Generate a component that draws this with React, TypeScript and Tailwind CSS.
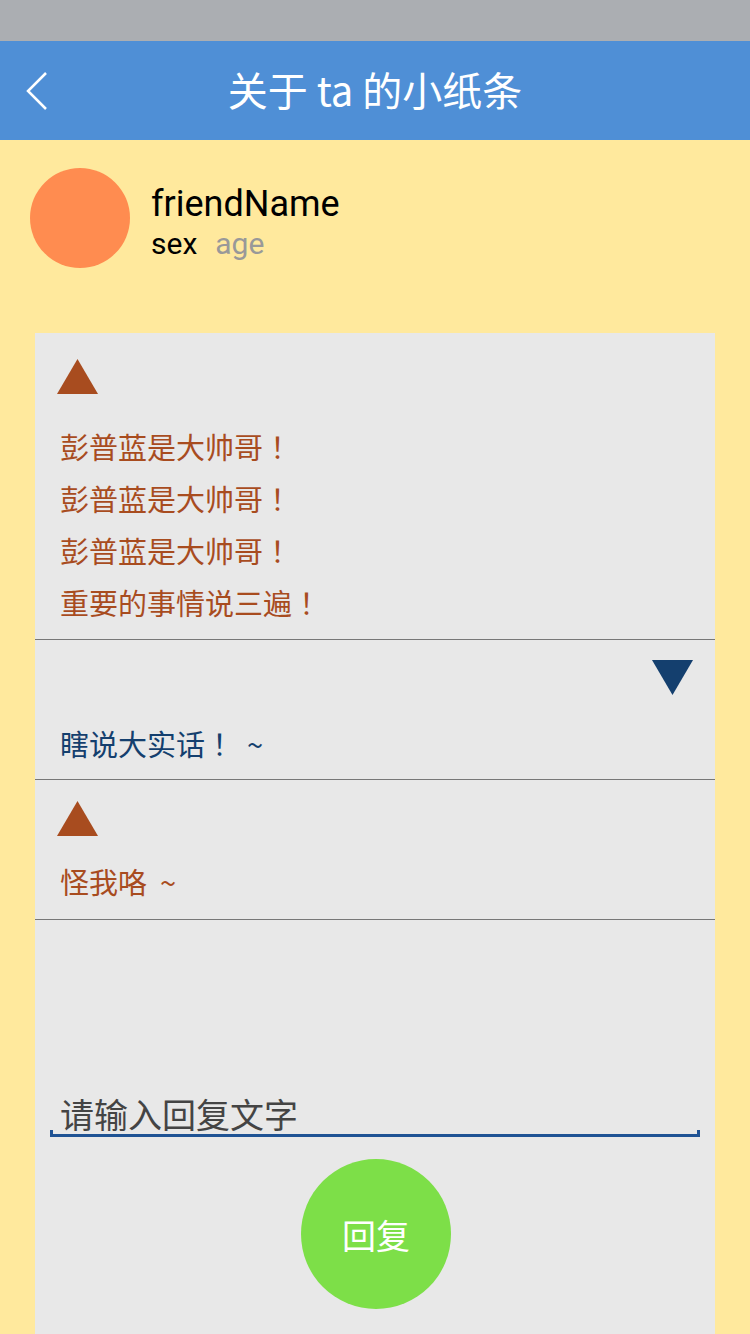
const font = "font-['Noto_Sans_CJK_SC','Noto_Sans',sans-serif]";

// 全角感叹号居中显示
function Bang() {
  return <span className="font-['Noto_Sans_CJK_TC',sans-serif]">！</span>;
}

function Up() {
  return (
    <svg width="41" height="35" viewBox="0 0 41 35" className="block">
      <polygon points="20.5,0 41,35 0,35" fill="#a84c1f" />
    </svg>
  );
}

function Down() {
  return (
    <svg width="41" height="35" viewBox="0 0 41 35" className="block">
      <polygon points="0,0 41,0 20.5,35" fill="#143f6e" />
    </svg>
  );
}

export default function App() {
  return (
    <div className={`w-[750px] h-[1334px] overflow-hidden bg-[#ffe99d] flex flex-col ${font}`}>
      {/* 状态栏 */}
      <div className="h-[41px] bg-[#abaeb2]" />

      {/* 标题栏 */}
      <div className="h-[99px] bg-[#4f8fd6] flex items-center relative">
        <svg width="24" height="40" viewBox="0 0 24 40" className="ml-[25px]">
          <polyline points="21,2 3,20 21,38" fill="none" stroke="#fff" strokeWidth="2.5" />
        </svg>
        <div className="absolute inset-0 flex items-center justify-center text-white text-[40px] leading-none pb-[4px]">
          关于 ta 的小纸条
        </div>
      </div>

      {/* 好友信息 */}
      <div className="flex pl-[30px] pt-[28px] h-[128px] items-start font-['Roboto',sans-serif]">
        <div className="w-[100px] h-[100px] rounded-full bg-[#ff8c50]" />
        <div className="ml-[21px] pt-[16px] flex flex-col">
          <div className="text-[36px] leading-[40px] text-black">friendName</div>
          <div className="text-[30px] leading-[40px] flex gap-[18px]">
            <span className="text-black">sex</span>
            <span className="text-[#999]">age</span>
          </div>
        </div>
      </div>

      {/* 纸条卡片 */}
      <div className="mx-[35px] mt-[65px] flex-1 bg-[#e8e8e8] flex flex-col">
        <div className="pt-[26px] pb-[11px] border-b border-[#777]">
          <div className="pl-[22px]"><Up /></div>
          <div className="mt-[26px] pl-[25px] text-[29px] leading-[52px] text-[#a84c1f]">
            <div>彭普蓝是大帅哥<Bang /></div>
            <div>彭普蓝是大帅哥<Bang /></div>
            <div>彭普蓝是大帅哥<Bang /></div>
            <div>重要的事情说三遍<Bang /></div>
          </div>
        </div>

        <div className="pt-[20px] pb-[10px] border-b border-[#777]">
          <div className="flex justify-end pr-[22px]"><Down /></div>
          <div className="mt-[22px] pl-[25px] text-[29px] leading-[52px] text-[#143f6e]">瞎说大实话<Bang />&nbsp;&nbsp;~</div>
        </div>

        <div className="pt-[21px] pb-[12px] border-b border-[#777]">
          <div className="pl-[22px]"><Up /></div>
          <div className="mt-[19px] pl-[25px] text-[29px] leading-[52px] text-[#a84c1f]">怪我咯&nbsp;&nbsp;~</div>
        </div>

        {/* 回复输入 */}
        <div className="mt-[173px] mx-[15px] relative">
          <div className="pl-[10px] text-[34px] leading-[41px] text-[#444]">请输入回复文字</div>
          <div className="h-[3px] bg-[#1f5394]" />
          <div className="absolute left-0 bottom-0 w-[3px] h-[7px] bg-[#1f5394]" />
          <div className="absolute right-0 bottom-0 w-[3px] h-[7px] bg-[#1f5394]" />
        </div>

        <div className="flex justify-center mt-[22px] pl-[2px]">
          <button className="w-[150px] h-[150px] rounded-full bg-[#7ddf48] text-white text-[34px] flex items-center justify-center">
            回复
          </button>
        </div>
      </div>
    </div>
  );
}
